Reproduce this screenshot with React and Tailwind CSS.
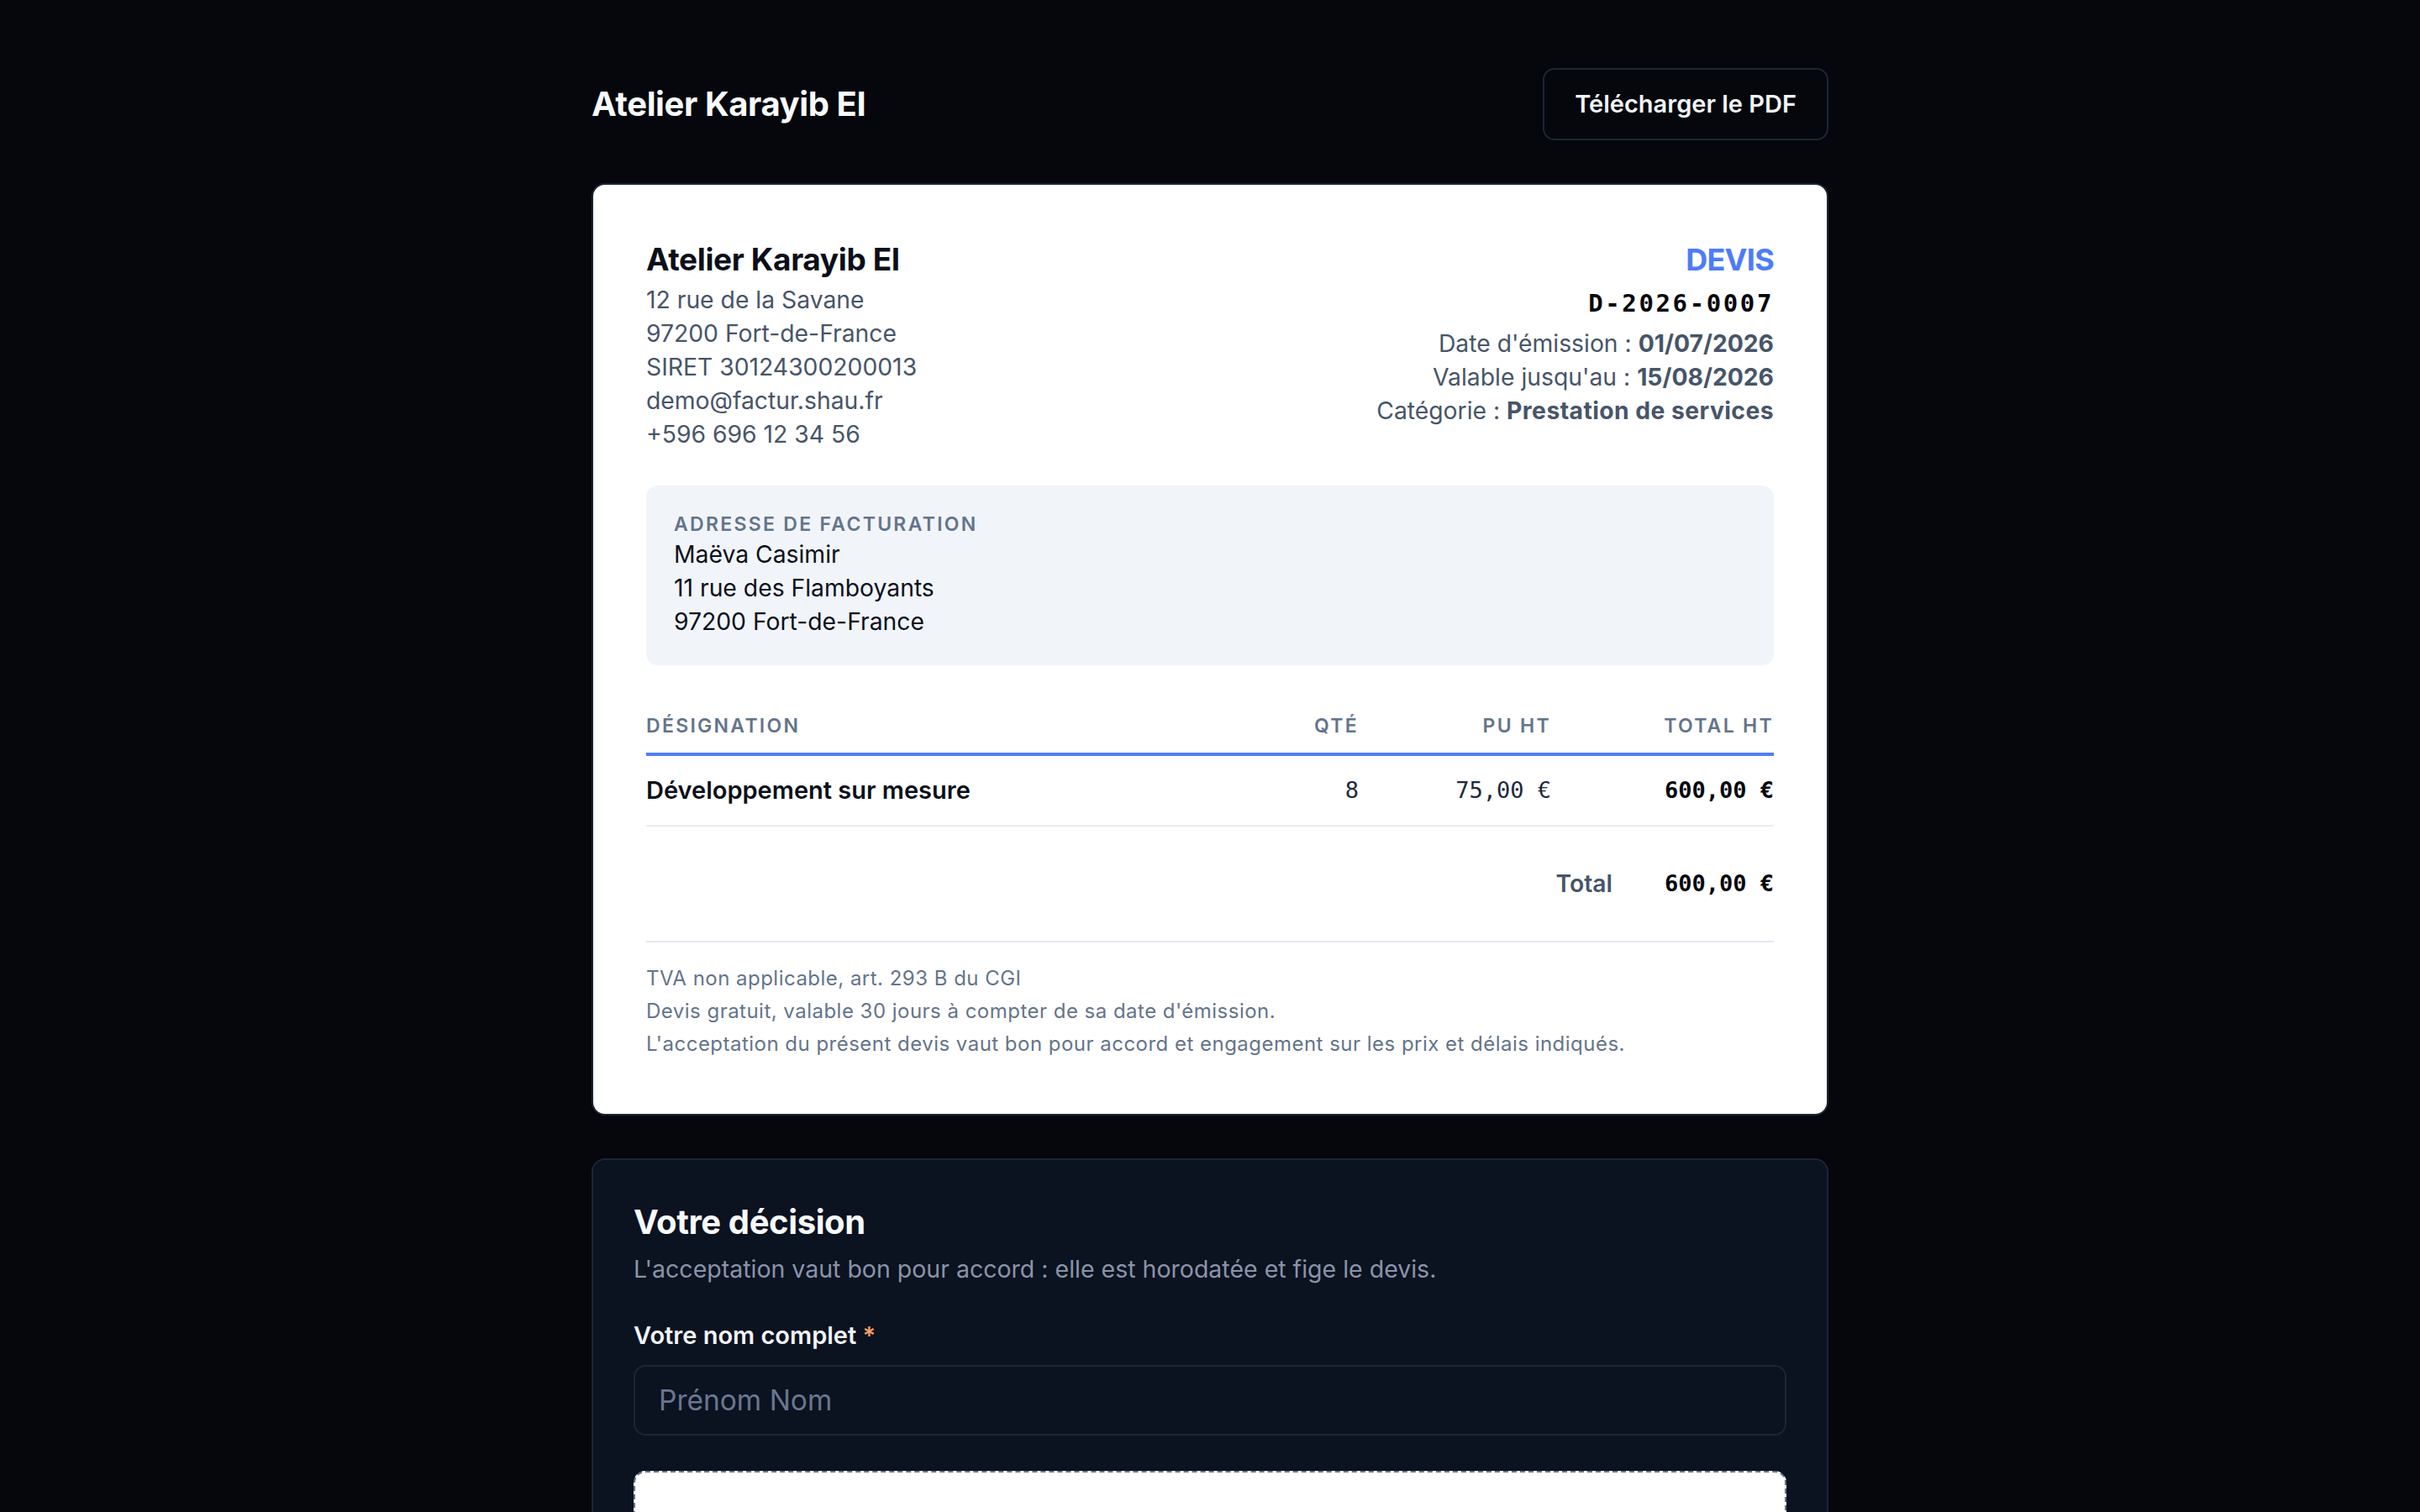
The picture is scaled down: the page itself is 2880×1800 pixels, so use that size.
import { useState } from "react";

const emitter = {
  name: "Atelier Karayib EI",
  lines: [
    "12 rue de la Savane",
    "97200 Fort-de-France",
    "SIRET 30124300200013",
    "demo@factur.shau.fr",
    "+596 696 12 34 56",
  ],
};

const client = ["Maëva Casimir", "11 rue des Flamboyants", "97200 Fort-de-France"];

const items = [
  { label: "Développement sur mesure", qty: "8", unit: "75,00 €", total: "600,00 €" },
];

const notes = [
  "TVA non applicable, art. 293 B du CGI",
  "Devis gratuit, valable 30 jours à compter de sa date d'émission.",
  "L'acceptation du présent devis vaut bon pour accord et engagement sur les prix et délais indiqués.",
];

const mono = "font-['DejaVu_Sans_Mono','Liberation_Mono',monospace]";

function QuoteDocument() {
  return (
    <div className="mt-[51px] rounded-[16px] border-2 border-[#1c2538] bg-white px-[63px] pt-[62px] pb-[64px]">
      {/* Emitter + quote meta */}
      <div className="flex items-start justify-between">
        <div>
          <h2 className="text-[37px] font-bold leading-[54px] tracking-[-0.01em] text-[#0b0f19]">
            {emitter.name}
          </h2>
          <div className="mt-px text-[28.3px] leading-[40px] text-[#475569]">
            {emitter.lines.map((line) => (
              <div key={line}>{line}</div>
            ))}
          </div>
        </div>
        <div className="text-right">
          <div className="text-[36px] font-bold leading-[54px] tracking-[-0.02em] text-[#4d7cf7]">
            DEVIS
          </div>
          <div className={`mt-[5px] text-[29px] font-bold leading-[40px] tracking-[0.09em] text-[#05070c] ${mono}`}>
            D-2026-0007
          </div>
          <div className="mt-[8px] text-[28.3px] leading-[40px] text-[#475569]">
            <div>
              Date d'émission : <span className="font-bold">01/07/2026</span>
            </div>
            <div>
              Valable jusqu'au : <span className="font-bold">15/08/2026</span>
            </div>
            <div>
              Catégorie : <span className="font-bold tracking-[0.015em]">Prestation de services</span>
            </div>
          </div>
        </div>
      </div>

      {/* Billing address */}
      <div className="mt-[41px] rounded-[14px] bg-[#f1f5f9] px-[33px] py-[32px]">
        <div className="text-[23px] font-semibold uppercase leading-[28px] tracking-[0.1em] text-[#64748b]">
          Adresse de facturation
        </div>
        <div className="mt-[2px] text-[28.3px] leading-[40px] text-[#0b1020]">
          {client.map((line) => (
            <div key={line}>{line}</div>
          ))}
        </div>
      </div>

      {/* Lines */}
      <div className="mt-[42px]">
        <div className="grid grid-cols-[1fr_150px_229px_265px] border-b-4 border-[#4f7ef6] pt-[14px] pb-[16px] text-[23px] font-semibold uppercase leading-[32px] tracking-[0.1em] text-[#64748b]">
          <div>Désignation</div>
          <div className="text-right">Qté</div>
          <div className="text-right">PU HT</div>
          <div className="text-right">Total HT</div>
        </div>
        {items.map((item) => (
          <div
            key={item.label}
            className="grid grid-cols-[1fr_150px_229px_265px] items-center border-b-2 border-[#e8edf3] pt-[21px] pb-[21px] leading-[40px]"
          >
            <div className="text-[29px] font-semibold text-[#0b0f19]">{item.label}</div>
            <div className={`text-right text-[27px] text-[#1e293b] ${mono}`}>{item.qty}</div>
            <div className={`text-right text-[27px] text-[#1e293b] ${mono}`}>{item.unit}</div>
            <div className={`text-right text-[27px] font-bold text-[#05070c] ${mono}`}>{item.total}</div>
          </div>
        ))}
        <div className="flex items-center justify-end gap-[62px] border-b-2 border-[#e2e8f0] pt-[48px] pb-[48px] leading-[40px]">
          <div className="text-[28.3px] font-semibold text-[#475569]">Total</div>
          <div className={`text-[27px] font-bold text-[#05070c] ${mono}`}>600,00 €</div>
        </div>
      </div>

      {/* Legal notes */}
      <div className="pt-[23px] text-[24px] leading-[39px] tracking-[0.02em] text-[#64748b]">
        {notes.map((n) => (
          <div key={n}>{n}</div>
        ))}
      </div>
    </div>
  );
}

function DecisionPanel() {
  const [name, setName] = useState("");

  return (
    <div className="mt-[51px] rounded-[16px] border-2 border-[#1c2538] bg-[#0b1220] px-[48px] pt-[48px] pb-[48px]">
      <h3 className="text-[40px] font-bold leading-[52px] tracking-[-0.01em] text-[#f8fafc]">
        Votre décision
      </h3>
      <p className="mt-[10px] text-[28.5px] leading-[40px] text-[#8a94a9]">
        L'acceptation vaut bon pour accord : elle est horodatée et fige le devis.
      </p>

      <label className="mt-[39px] block text-[29px] font-semibold leading-[40px] text-[#f1f5f9]">
        Votre nom complet <span className="text-[#f59e61]">*</span>
      </label>
      <input
        value={name}
        onChange={(e) => setName(e.target.value)}
        placeholder="Prénom Nom"
        className="mt-[15px] block h-[84px] w-full rounded-[14px] border-2 border-[#1c2538] bg-[#0b1220] px-[28px] text-[33.5px] text-[#f1f5f9] outline-none placeholder:text-[#6b7690]"
      />

      {/* Signature pad */}
      <div className="mt-[42px] h-[320px] rounded-[14px] border-2 border-dashed border-[#64748b] bg-white" />

      <div className="mt-[40px] flex gap-[24px]">
        <button className="h-[84px] flex-1 rounded-[14px] bg-[#4f7ef6] text-[29px] font-semibold text-white">
          Accepter le devis
        </button>
        <button className="h-[84px] flex-1 rounded-[14px] border-2 border-[#1c2538] text-[29px] font-semibold text-[#f1f5f9]">
          Refuser
        </button>
      </div>
    </div>
  );
}

export default function App() {
  return (
    <div className="min-h-screen bg-[#05070c] font-['Inter','Noto_Sans',sans-serif]">
      <div className="mx-auto flex w-[1472px] flex-col pt-[81px] pb-[80px]">
        <header className="flex h-[86px] items-center justify-between">
          <h1 className="text-[40px] font-bold tracking-[-0.01em] text-[#f8fafc]">
            {emitter.name}
          </h1>
          <button className="h-[86px] rounded-[14px] border-2 border-[#1c2538] px-[36px] text-[29px] font-semibold text-[#f1f5f9]">
            Télécharger le PDF
          </button>
        </header>
        <QuoteDocument />
        <DecisionPanel />
      </div>
    </div>
  );
}
